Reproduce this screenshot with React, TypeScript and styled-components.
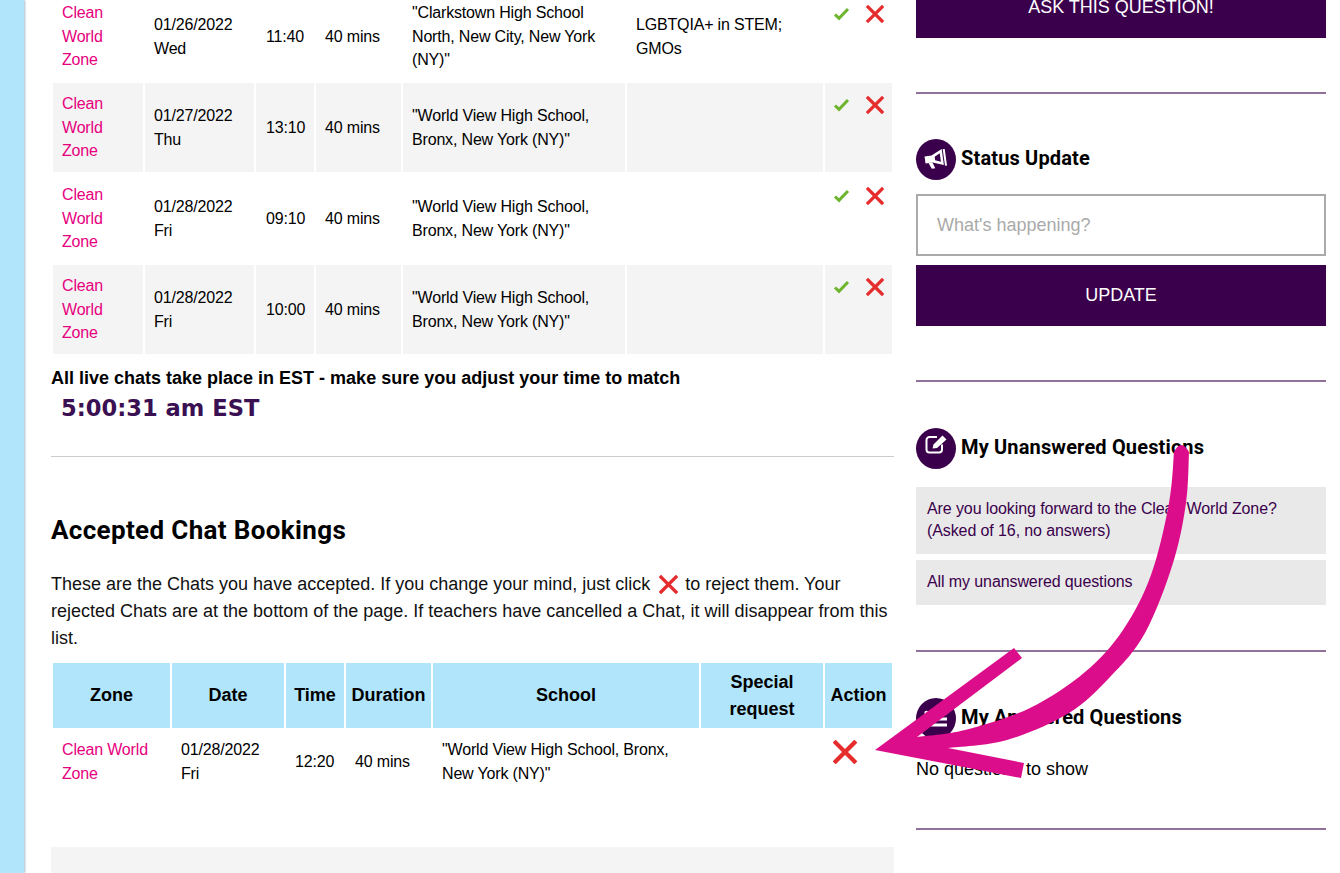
import React from 'react';
import styled, { createGlobalStyle } from 'styled-components';

const Global = createGlobalStyle`
  html, body { margin: 0; padding: 0; background: #fff; overflow: hidden; }
  body { font-family: "Liberation Sans", Arial, sans-serif; color: #000; }
`;
const Page = styled.div`
  position: relative; width: 1340px; height: 873px; overflow: hidden; display: flex; background: #fff;
`;
const Stripe = styled.div`
  flex: none; width: 24px; height: 873px; background: #b0e5fb; box-shadow: 1px 0 2px rgba(0, 60, 100, 0.35);
`;
const Main = styled.main`
  flex: none; width: 843px; margin-left: 27px; margin-top: -10px;
`;
const Side = styled.aside`
  flex: none; width: 410px; margin-left: 22px; margin-top: -23px;
`;
const Table = styled.table`
  width: 843px; table-layout: fixed; border-collapse: separate; border-spacing: 2px; font-size: 16px; line-height: 23.4px;
`;
const Row = styled.tr<{ $shade?: boolean }>`
  background: ${p => (p.$shade ? '#f4f4f4' : '#fff')};
  height: 89px;
`;
const Td = styled.td`
  padding: 0 9px; vertical-align: middle; letter-spacing: -0.17px;
`;
const TimeTd = styled(Td)`
  padding: 0 10px;
`;
const ActionTd = styled.td`
  padding: 9px 0 0 8px; vertical-align: top; white-space: nowrap;
`;
const ZoneLink = styled.a`
  color: #e6007e;
`;
const Notice = styled.div`
  font-size: 18px; font-weight: 700; line-height: 24px; margin-top: 10px; white-space: nowrap;
`;
const Clock = styled.div`
  font-family: "DejaVu Sans", Verdana, sans-serif; font-weight: 700; font-size: 22.6px; line-height: 36px; color: #3b1053; padding-left: 10px;
`;
const Rule = styled.hr`
  border: 0; height: 1px; background: #ccc; margin: 30px 0 0;
`;
const H2 = styled.h2`
  font-family: Roboto, sans-serif; font-weight: 700; font-size: 26px; line-height: 34px; letter-spacing: 0.35px; margin: 56px 0 0;
`;
const Para = styled.p`
  font-size: 18px; line-height: 27px; margin: 24px 0 0; color: #111;
`;
const CrossSvg = styled.svg`
  vertical-align: middle;
`;
const InlineCross = styled.span`
  display: inline-block; margin: 0 2px 0 4px; line-height: 0; vertical-align: 1px;
`;
const AcceptedTable = styled(Table)`
  margin-top: 9px;
`;
const Th = styled.th`
  background: #b0e5fb; height: 65px; padding: 0; font-size: 18px; line-height: 27px; font-weight: 700; text-align: center;
`;
const AcceptedRow = styled.tr`
  height: 63px;
`;
const BigActionTd = styled.td`
  padding: 0 0 20px 8px; vertical-align: middle;
`;
const GreyPanel = styled.div`
  height: 60px; background: #f4f4f4; margin-top: 52px;
`;
const PurpleButton = styled.button<{ $h: number }>`
  display: block; width: 100%; height: ${p => p.$h}px; border: 0; background: #3b004c; color: #fff;
  font: 18px "Liberation Sans", Arial, sans-serif; text-transform: uppercase; padding: 0;
`;
const Divider = styled.div<{ $top: number }>`
  height: 2px; background: #8f7199; margin-top: ${p => p.$top}px;
`;
const Heading = styled.div<{ $top: number }>`
  display: flex; align-items: center; gap: 5px; margin-top: ${p => p.$top}px; height: 41px;
`;
const IconCircle = styled.div`
  flex: none; width: 40px; height: 41px; border-radius: 50%; background: #3b004c;
  display: flex; align-items: center; justify-content: center;
`;
const RaisedIcon = styled.svg`
  margin-bottom: 9px;
`;
const HeadingText = styled.h3`
  margin: 0 0 3px; font-family: Roboto, sans-serif; font-weight: 700; font-size: 20px; letter-spacing: 0.15px; white-space: nowrap;
`;
const StatusInput = styled.input`
  display: block; box-sizing: border-box; width: 100%; height: 62px; margin-top: 14px; border: 2px solid #aaa; padding: 0 19px; background: #fff;
  font: 18px "Liberation Sans", Arial, sans-serif; outline: 0;
  &::placeholder { color: #aaa; opacity: 1; }
`;
const UpdateWrap = styled.div`
  margin-top: 9px;
`;
const QuestionBox = styled.a<{ $top: number }>`
  display: block; background: #e9e9e9; color: #3b004c; font-size: 16px; line-height: 22px; letter-spacing: -0.1px; padding: 11px 11px 12px; margin-top: ${p => p.$top}px;
`;
const Empty = styled.div`
  font-size: 18px; line-height: 24px; margin-top: 18px;
`;
const Overlay = styled.svg`
  position: absolute; left: 0; top: 0; width: 1340px; height: 873px; pointer-events: none;
`;

const Check = () => (
  <svg width="17" height="14" viewBox="0 0 17 14" style={{ verticalAlign: 'middle', marginRight: 16 }}>
    <polyline points="2,7.5 6,11.3 15,2" fill="none" stroke="#6cb52d" strokeWidth="3" />
  </svg>
);
const Cross = ({ size = 18 }: { size?: number }) => (
  <CrossSvg viewBox="0 0 18 18" width={size} height={size}>
    <path d="M2 2 L16 16 M16 2 L2 16" stroke="#e52d2d" strokeWidth="3.2" strokeLinecap="square" fill="none" />
  </CrossSvg>
);

const Megaphone = () => (
  <svg width="24" height="21" viewBox="0 0 24 21">
    <g transform="rotate(-8 12 10)">
      <path fill="#fff" fillRule="evenodd" d="M1 6 H8 L19 1 V17 L8 13 H1 Z M11 7.5 L16.5 4.9 V13.5 L11 11 Z" />
      <path fill="#fff" d="M4 13 H8 L10 19 H6.5 Z M20 0 H22 V18 H20 Z" />
    </g>
  </svg>
);
const EditIcon = () => (
  <RaisedIcon width="23" height="20" viewBox="0 0 23 20">
    <path d="M12 3 H4.5 A3 3 0 0 0 1.5 6 V15.5 A3 3 0 0 0 4.5 18.5 H14 A3 3 0 0 0 17 15.5 V10.5" fill="none" stroke="#fff" strokeWidth="2" />
    <path fill="#fff" d="M7.5 14.5 L8.5 10.5 L17.5 1.5 L21.5 5.5 L12 14 Z" />
  </RaisedIcon>
);
const ListIcon = () => (
  <svg width="24" height="18" viewBox="0 0 24 18">
    <g fill="#fff">
      <circle cx="2.5" cy="3" r="2.2" /><circle cx="2.5" cy="9" r="2.2" /><circle cx="2.5" cy="15" r="2.2" />
      <rect x="7" y="1.5" width="16" height="3" /><rect x="7" y="7.5" width="16" height="3" /><rect x="7" y="13.5" width="16" height="3" />
    </g>
  </svg>
);

type Pt = [number, number];
const smooth = (pts: Pt[]) => {
  let d = '';
  for (let i = 0; i < pts.length - 1; i++) {
    const p0 = pts[Math.max(i - 1, 0)], p1 = pts[i], p2 = pts[i + 1], p3 = pts[Math.min(i + 2, pts.length - 1)];
    const c1: Pt = [p1[0] + (p2[0] - p0[0]) / 6, p1[1] + (p2[1] - p0[1]) / 6];
    const c2: Pt = [p2[0] - (p3[0] - p1[0]) / 6, p2[1] - (p3[1] - p1[1]) / 6];
    d += ` C${c1[0].toFixed(1)} ${c1[1].toFixed(1)} ${c2[0].toFixed(1)} ${c2[1].toFixed(1)} ${p2[0]} ${p2[1]}`;
  }
  return d;
};
const upper: Pt[] = [[917, 737], [965, 730], [1030, 708], [1085, 672], [1123, 630], [1151, 575], [1169, 503], [1174, 452]];
const lower: Pt[] = [[1189, 452], [1186, 503], [1173, 563], [1145, 633], [1110, 677], [1069, 713], [1007, 740], [948, 748]];
const arrowPath = `M875 750 L1014 648 L1022 658 L917 737${smooth(upper)} Q1181 438 1189 452${smooth(lower)} L1024 763 L1021 778 Z`;

const rows = [
  { d: '01/26/2022', w: 'Wed', t: '11:40', s: '"Clarkstown High School North, New City, New York (NY)"', x: 'LGBTQIA+ in STEM; GMOs' },
  { d: '01/27/2022', w: 'Thu', t: '13:10', s: '"World View High School, Bronx, New York (NY)"', x: '' },
  { d: '01/28/2022', w: 'Fri', t: '09:10', s: '"World View High School, Bronx, New York (NY)"', x: '' },
  { d: '01/28/2022', w: 'Fri', t: '10:00', s: '"World View High School, Bronx, New York (NY)"', x: '' },
];

export default function App() {
  return (
    <Page>
      <Global />
      <Stripe />
      <Main>
        <Table>
          <colgroup>
            <col style={{ width: 90 }} /><col style={{ width: 109 }} /><col style={{ width: 58 }} /><col style={{ width: 85 }} />
            <col style={{ width: 222 }} /><col style={{ width: 196 }} /><col style={{ width: 67 }} />
          </colgroup>
          <tbody>
            {rows.map((r, i) => (
              <Row key={i} $shade={i % 2 === 1}>
                <Td><ZoneLink>Clean World Zone</ZoneLink></Td>
                <Td>{r.d}<br />{r.w}</Td>
                <TimeTd>{r.t}</TimeTd>
                <Td>40 mins</Td>
                <Td>{r.s}</Td>
                <Td>{r.x}</Td>
                <ActionTd><Check /><Cross /></ActionTd>
              </Row>
            ))}
          </tbody>
        </Table>
        <Notice>All live chats take place in EST - make sure you adjust your time to match</Notice>
        <Clock>5:00:31 am EST</Clock>
        <Rule />
        <H2>Accepted Chat Bookings</H2>
        <Para>
          These are the Chats you have accepted. If you change your mind, just click <InlineCross><Cross size={19} /></InlineCross> to reject them. Your rejected Chats are at the bottom of the page. If teachers have cancelled a Chat, it will disappear from this list.
        </Para>
        <AcceptedTable>
          <colgroup>
            <col style={{ width: 117 }} /><col style={{ width: 112 }} /><col style={{ width: 58 }} /><col style={{ width: 85 }} />
            <col style={{ width: 266 }} /><col style={{ width: 122 }} /><col style={{ width: 67 }} />
          </colgroup>
          <thead>
            <tr><Th>Zone</Th><Th>Date</Th><Th>Time</Th><Th>Duration</Th><Th>School</Th><Th>Special request</Th><Th>Action</Th></tr>
          </thead>
          <tbody>
            <AcceptedRow>
              <Td><ZoneLink>Clean World Zone</ZoneLink></Td>
              <Td>01/28/2022<br />Fri</Td>
              <Td>12:20</Td>
              <Td>40 mins</Td>
              <Td>"World View High School, Bronx, New York (NY)"</Td>
              <Td />
              <BigActionTd><Cross size={24} /></BigActionTd>
            </AcceptedRow>
          </tbody>
        </AcceptedTable>
        <GreyPanel />
      </Main>
      <Side>
        <PurpleButton $h={61}>Ask this question!</PurpleButton>
        <Divider $top={54} />
        <Heading $top={45}>
          <IconCircle><Megaphone /></IconCircle>
          <HeadingText>Status Update</HeadingText>
        </Heading>
        <StatusInput placeholder="What's happening?" readOnly />
        <UpdateWrap><PurpleButton $h={61}>Update</PurpleButton></UpdateWrap>
        <Divider $top={54} />
        <Heading $top={46}>
          <IconCircle><EditIcon /></IconCircle>
          <HeadingText>My Unanswered Questions</HeadingText>
        </Heading>
        <QuestionBox $top={18}>Are you looking forward to the Clean World Zone? (Asked of 16, no answers)</QuestionBox>
        <QuestionBox $top={6}>All my unanswered questions</QuestionBox>
        <Divider $top={45} />
        <Heading $top={46}>
          <IconCircle><ListIcon /></IconCircle>
          <HeadingText>My Answered Questions</HeadingText>
        </Heading>
        <Empty>No questions to show</Empty>
        <Divider $top={47} />
      </Side>
      <Overlay viewBox="0 0 1340 873">
        <path fill="#dc0d8a" d={arrowPath} />
      </Overlay>
    </Page>
  );
}
